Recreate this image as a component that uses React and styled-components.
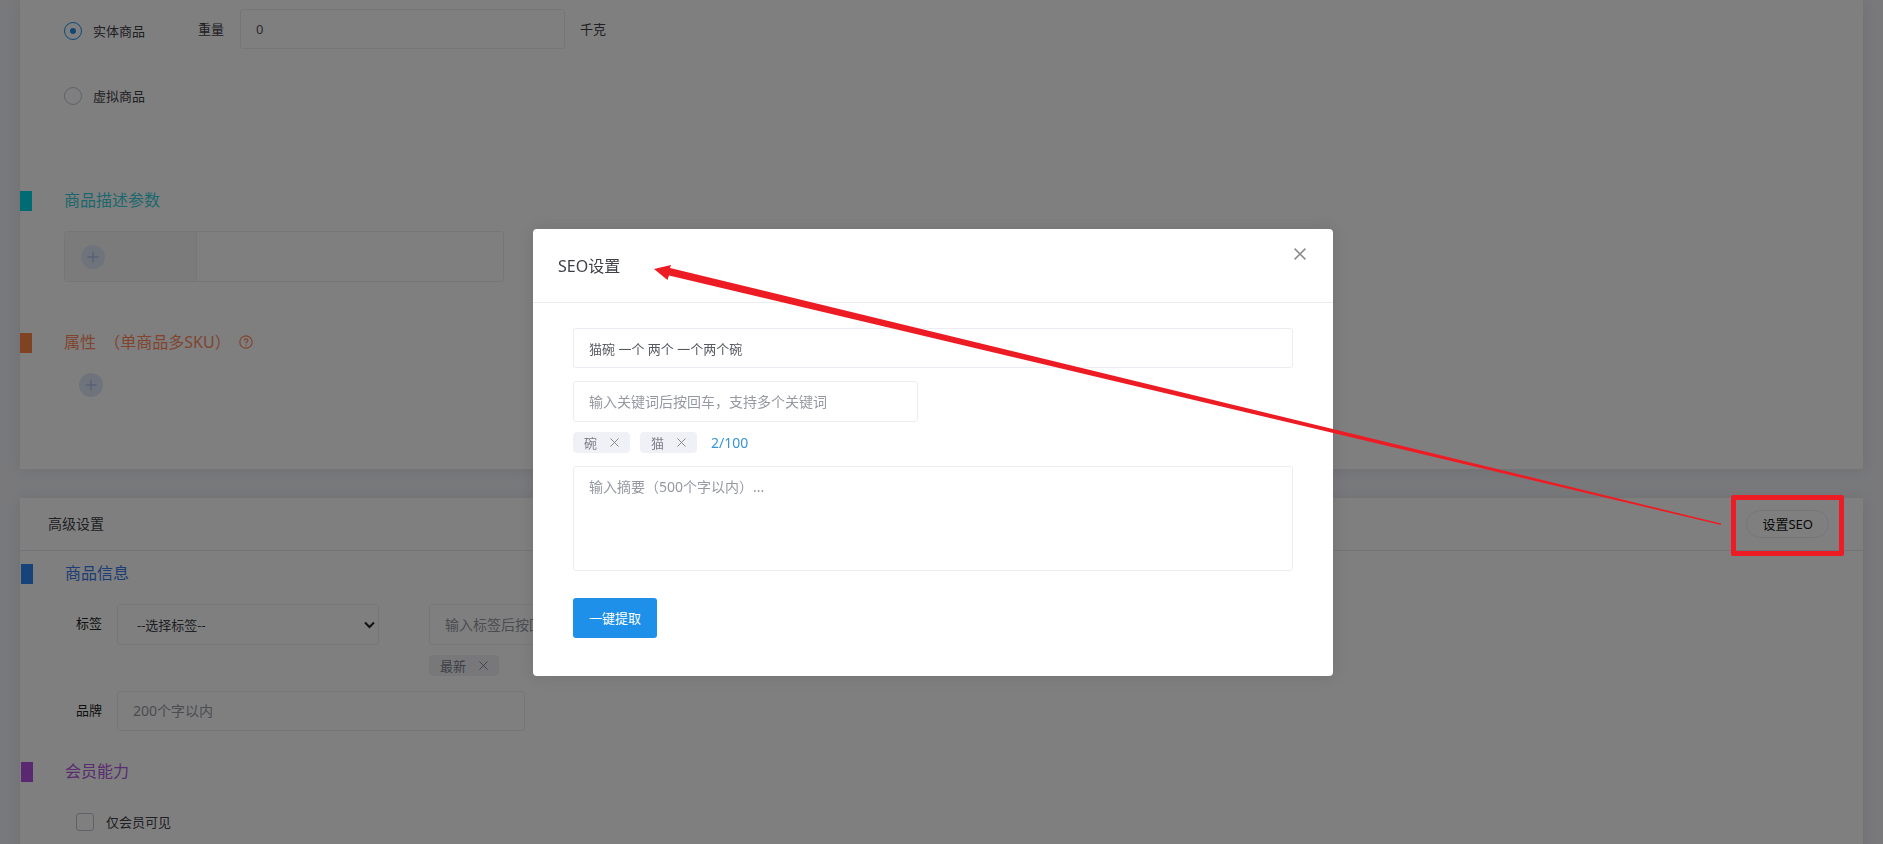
import React from 'react';
import styled, { createGlobalStyle, css } from 'styled-components';

const GlobalStyle = createGlobalStyle`
  *, *::before, *::after { box-sizing: border-box; }
  body {
    margin: 0;
    background: #f2f3f8;
    color: #3f4047;
    font: 13px/20px "Noto Sans", "Noto Sans CJK SC", sans-serif;
    overflow: hidden;
  }
  input, select, textarea, button { font: inherit; color: inherit; margin: 0; }
  h2, h3, p { margin: 0; font-weight: 400; }
`;

const Page = styled.main`
  display: flex;
  flex-direction: column;
  gap: 29px;
  padding: 0 20px;
  height: 100vh;
  overflow: hidden;
`;

const Card = styled.section`
  flex: none;
  padding-bottom: 72px;
  background: #fff;
  box-shadow: 0 1px 15px 1px rgba(69, 65, 78, 0.1);
`;

const ShippingRow = styled.div`
  display: flex;
  align-items: center;
  height: 40px;
  margin: ${(p) => p.$top}px 0 0 44px;
`;

const RadioLabel = styled.label`
  display: flex;
  align-items: center;
  gap: 11px;
  width: 134px;
  padding-top: 4px;
`;

const Radio = styled.input`
  appearance: none;
  display: grid;
  place-items: center;
  width: 18px;
  height: 18px;
  border: 1px solid #bdc3d4;
  border-radius: 50%;
  &:checked { border-color: #1e90ea; }
  &:checked::after {
    content: '';
    width: 6px;
    height: 6px;
    border-radius: 50%;
    background: #1e90ea;
  }
`;

const fieldStyle = css`
  border: 1px solid #ebedf2;
  border-radius: 3px;
  background: #fff;
  color: #575962;
  outline: none;
`;

const TextField = styled.input`
  ${fieldStyle}
  height: ${(p) => (p.$tall ? 41 : 40)}px;
  width: ${(p) => p.$width || '100%'};
  padding: 0 15px;
  &::placeholder { color: #9699a2; font-size: 14px; opacity: 1; }
`;

const TextArea = styled.textarea`
  ${fieldStyle}
  display: block;
  width: 100%;
  height: 105px;
  padding: 10px 15px;
  resize: none;
  &::placeholder { color: #9699a2; font-size: 14px; opacity: 1; }
`;

const SelectBox = styled.div`
  position: relative;
  width: 262px;
  svg { position: absolute; right: 4px; top: 17px; pointer-events: none; }
`;

const Select = styled.select`
  ${fieldStyle}
  appearance: none;
  width: 100%;
  height: 41px;
  padding: 0 19px;
  color: #3f4047;
`;

const UnitLabel = styled.label`
  width: 42px;
`;

const Unit = styled.span`
  margin-left: 15px;
`;

const SectionHead = styled.div`
  display: flex;
  align-items: center;
  height: 20px;
  margin: ${(p) => p.$top}px 0 0 ${(p) => p.$inset || 0}px;
  color: ${(p) => p.$color};
  &::before {
    content: '';
    width: 12px;
    height: 20px;
    margin-right: 32px;
    background: ${(p) => p.$bar};
  }
`;

const SectionTitle = styled.h3`
  padding-bottom: 2px;
  font-size: 16px;
  line-height: 20px;
  white-space: pre;
`;

const HelpButton = styled.button`
  display: flex;
  margin-left: 8px;
  padding: 0 0 3px;
  border: 0;
  background: none;
`;

const ParamTable = styled.div`
  display: grid;
  grid-template-columns: 132px 1fr;
  width: 440px;
  height: 51px;
  margin: 20px 0 0 44px;
  border: 1px solid #ebedf2;
  border-radius: 3px;
`;

const ParamName = styled.div`
  display: flex;
  align-items: center;
  padding-left: 16px;
  background: #f7f7f8;
  border-right: 1px solid #ebedf2;
`;

const AddButton = styled.button`
  display: grid;
  place-items: center;
  width: 24px;
  height: 24px;
  padding: 0;
  border: 0;
  border-radius: 50%;
  background: #dfe6f6;
  color: #9db2e6;
`;

const AttributeRow = styled.div`
  padding: 20px 0 0 59px;
`;

const CardHead = styled.header`
  display: flex;
  align-items: center;
  justify-content: space-between;
  height: 53px;
  padding: 0 34px 0 28px;
  border-bottom: 1px solid #e6e8ee;
`;

const CardTitle = styled.h2`
  font-size: 14px;
  line-height: 20px;
`;

const PillButton = styled.button`
  height: 28px;
  padding: 0 15px;
  border: 1px solid #ebedf2;
  border-radius: 14px;
  background: #fff;
  color: #111;
`;

const FormRow = styled.div`
  display: flex;
  margin: ${(p) => p.$top}px 0 0 56px;
`;

const RowLabel = styled.label`
  width: 41px;
  padding-top: 9px;
  color: #222;
`;

const TagColumn = styled.div`
  display: flex;
  flex-direction: column;
  gap: 10px;
  margin-left: 50px;
`;

const TagList = styled.div`
  display: flex;
  align-items: center;
  gap: 10px;
`;

const TagBox = styled.span`
  display: flex;
  align-items: center;
  gap: 13px;
  height: 21px;
  padding: 0 11px;
  border-radius: 4px;
  background: #f0f1f7;
  color: #7b7e8a;
  button { display: flex; padding: 0; border: 0; background: none; }
`;

const CheckLabel = styled.label`
  display: flex;
  align-items: center;
  gap: 12px;
  height: 20px;
  margin: 30px 0 0 56px;
`;

const Checkbox = styled.input`
  appearance: none;
  width: 18px;
  height: 18px;
  border: 1px solid #bdc3d4;
  border-radius: 3px;
`;

const Backdrop = styled.div`
  position: fixed;
  inset: 0;
  display: flex;
  justify-content: center;
  align-items: flex-start;
  padding: 229px 17px 0 0;
  background: rgba(0, 0, 0, 0.5);
`;

const Dialog = styled.div`
  width: 800px;
  border-radius: 4px;
  background: #fff;
  box-shadow: 0 0 15px 1px rgba(69, 65, 78, 0.2);
`;

const DialogHead = styled.header`
  display: flex;
  justify-content: space-between;
  align-items: flex-start;
  height: 74px;
  padding: 19px 27px 0 25px;
  border-bottom: 1px solid #e9ecef;
`;

const DialogTitle = styled.h2`
  padding-top: 8px;
  font-size: 16px;
  line-height: 20px;
`;

const CloseButton = styled.button`
  display: flex;
  padding: 0;
  border: 0;
  background: none;
  color: #8c8c8c;
`;

const DialogBody = styled.form`
  padding: 25px 40px 38px;
`;

const Field = styled.div`
  margin-bottom: ${(p) => p.$gap}px;
`;

const Count = styled.span`
  margin-left: 4px;
  color: #3795d6;
  font-size: 14px;
`;

const PrimaryButton = styled.button`
  height: 40px;
  padding: 0 16px;
  border: 0;
  border-radius: 3px;
  background: #1e90ea;
  color: #fff;
`;

const HighlightFrame = styled.div`
  position: fixed;
  top: 495px;
  right: 39px;
  width: 113px;
  height: 61px;
  border: 5px solid #ed1c24;
  border-radius: 2px;
  pointer-events: none;
`;

const Arrow = styled.svg`
  position: fixed;
  top: 264px;
  right: 161px;
  pointer-events: none;
`;

const PlusIcon = () => (
  <svg width="12" height="12" viewBox="0 0 12 12" stroke="currentColor" aria-hidden="true">
    <path d="M6 .5v11M.5 6h11" />
  </svg>
);

const CrossIcon = ({ size, width = 1 }) => (
  <svg width={size} height={size} viewBox="0 0 10 10" stroke="currentColor" strokeWidth={width} aria-hidden="true">
    <path d="M.5 .5l9 9M9.5 .5l-9 9" />
  </svg>
);

const HelpIcon = () => (
  <svg width="14" height="14" viewBox="0 0 14 14" fill="none" stroke="currentColor" strokeWidth="1.2" aria-hidden="true">
    <circle cx="7" cy="7" r="6.2" />
    <path d="M5.2 5.6c0-2.4 3.7-2.3 3.7-.1 0 1.3-1.9 1.4-1.9 3M7 9.4v1.3" />
  </svg>
);

const Tag = ({ children }) => (
  <TagBox>
    {children}
    <button type="button" aria-label={`删除${children}`}>
      <CrossIcon size={9} />
    </button>
  </TagBox>
);

export default function App() {
  return (
    <>
      <GlobalStyle />
      <Page>
        <Card>
          <ShippingRow $top={9}>
            <RadioLabel>
              <Radio type="radio" name="kind" defaultChecked />
              实体商品
            </RadioLabel>
            <UnitLabel htmlFor="weight">重量</UnitLabel>
            <TextField id="weight" $width="325px" defaultValue="0" />
            <Unit>千克</Unit>
          </ShippingRow>
          <ShippingRow $top={25}>
            <RadioLabel>
              <Radio type="radio" name="kind" />
              虚拟商品
            </RadioLabel>
          </ShippingRow>
          <SectionHead $top={77} $color="#38d0d8" $bar="#00d6e4">
            <SectionTitle>商品描述参数</SectionTitle>
          </SectionHead>
          <ParamTable>
            <ParamName>
              <AddButton type="button" aria-label="添加参数"><PlusIcon /></AddButton>
            </ParamName>
          </ParamTable>
          <SectionHead $top={51} $color="#ff8a62" $bar="#ff8446">
            <SectionTitle>属性  （单商品多SKU）</SectionTitle>
            <HelpButton type="button" aria-label="帮助"><HelpIcon /></HelpButton>
          </SectionHead>
          <AttributeRow>
            <AddButton type="button" aria-label="添加属性"><PlusIcon /></AddButton>
          </AttributeRow>
        </Card>

        <Card>
          <CardHead>
            <CardTitle>高级设置</CardTitle>
            <PillButton type="button">设置SEO</PillButton>
          </CardHead>
          <SectionHead $top={13} $inset={1} $color="#3d7be8" $bar="#2a86f5">
            <SectionTitle>商品信息</SectionTitle>
          </SectionHead>
          <FormRow $top={20}>
            <RowLabel htmlFor="label">标签</RowLabel>
            <SelectBox>
              <Select id="label">
                <option>--选择标签--</option>
              </Select>
              <svg width="11" height="8" viewBox="0 0 11 8" fill="none" stroke="#222" strokeWidth="2" aria-hidden="true">
                <path d="M1 1.5l4.5 4.5L10 1.5" />
              </svg>
            </SelectBox>
            <TagColumn>
              <TextField $tall $width="345px" aria-label="标签输入" placeholder="输入标签后按回车，支持多个标签" />
              <TagList><Tag>最新</Tag></TagList>
            </TagColumn>
          </FormRow>
          <FormRow $top={15}>
            <RowLabel htmlFor="brand">品牌</RowLabel>
            <TextField id="brand" $width="408px" placeholder="200个字以内" />
          </FormRow>
          <SectionHead $top={31} $inset={1} $color="#b35ae0" $bar="#b44fe3">
            <SectionTitle>会员能力</SectionTitle>
          </SectionHead>
          <CheckLabel>
            <Checkbox type="checkbox" />
            仅会员可见
          </CheckLabel>
        </Card>
      </Page>

      <Backdrop>
        <Dialog role="dialog" aria-labelledby="seo-title">
          <DialogHead>
            <DialogTitle id="seo-title">SEO设置</DialogTitle>
            <CloseButton type="button" aria-label="关闭"><CrossIcon size={12} width={1.3} /></CloseButton>
          </DialogHead>
          <DialogBody>
            <Field $gap={13}>
              <TextField aria-label="SEO标题" defaultValue="猫碗 一个 两个 一个两个碗" />
            </Field>
            <Field $gap={10}>
              <TextField $tall $width="345px" aria-label="关键词" placeholder="输入关键词后按回车，支持多个关键词" />
            </Field>
            <Field $gap={13}>
              <TagList>
                <Tag>碗</Tag>
                <Tag>猫</Tag>
                <Count>2/100</Count>
              </TagList>
            </Field>
            <Field $gap={27}>
              <TextArea aria-label="摘要" placeholder="输入摘要（500个字以内）..." />
            </Field>
            <PrimaryButton type="button">一键提取</PrimaryButton>
          </DialogBody>
        </Dialog>
      </Backdrop>

      <HighlightFrame />
      <Arrow width="1068" height="262" viewBox="0 0 1068 262" fill="#ed1c24" aria-hidden="true">
        <path d="M0 5L17 1L16 4L1067 259.500L1067 261L15 11.500L13.500 16Z" />
      </Arrow>
    </>
  );
}
